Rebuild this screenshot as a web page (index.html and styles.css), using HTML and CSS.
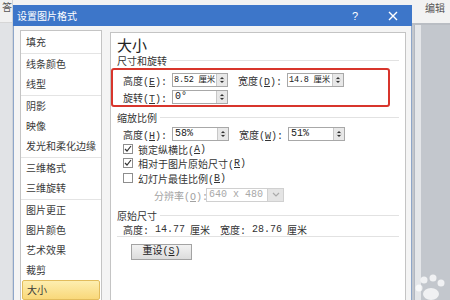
FILE: index.html
```html
<!DOCTYPE html>
<html lang="zh-CN">
<head>
    <meta charset="UTF-8">
    <title>设置图片格式</title>
    <link rel="stylesheet" href="styles.css">
</head>
<body>
    <div class="app-left">
        <div class="ribbon-left">答</div>
    </div>

    <div class="dialog-col">
        <div class="dialog">
            <div class="titlebar">
                <span class="title">设置图片格式</span>
                <span class="help">?</span>
                <svg class="close" width="10" height="10" viewBox="0 0 10 10">
                    <path d="M1 1L9 9M9 1L1 9" stroke="#fff" stroke-width="1.4" />
                </svg>
            </div>

            <div class="dlg-body">
                <!-- left category list -->
                <div class="cat-list">
                    <div class="cat-group">
                        <div class="cat">填充</div>
                    </div>
                    <div class="cat-group">
                        <div class="cat">线条颜色</div>
                        <div class="cat">线型</div>
                    </div>
                    <div class="cat-group">
                        <div class="cat">阴影</div>
                        <div class="cat">映像</div>
                        <div class="cat">发光和柔化边缘</div>
                    </div>
                    <div class="cat-group">
                        <div class="cat">三维格式</div>
                        <div class="cat">三维旋转</div>
                    </div>
                    <div class="cat-group">
                        <div class="cat">图片更正</div>
                        <div class="cat">图片颜色</div>
                        <div class="cat">艺术效果</div>
                        <div class="cat">裁剪</div>
                        <div class="cat active">大小</div>
                    </div>
                </div>

                <!-- size page -->
                <div class="panel">
                    <div class="panel-title">大小</div>

                    <div class="section"><span>尺寸和旋转</span><i></i></div>
                    <div class="row first">
                        <span class="lbl">高度(<u>E</u>):</span>
                        <div class="spin"><span class="val tight">8.52 厘米</span><span class="arrows"></span></div>
                        <span class="lbl lbl2">宽度(<u>D</u>):</span>
                        <div class="spin wide"><span class="val tight">14.8 厘米</span><span class="arrows"></span></div>
                    </div>
                    <div class="row">
                        <span class="lbl">旋转(<u>T</u>):</span>
                        <div class="spin"><span class="val">0°</span><span class="arrows"></span></div>
                    </div>

                    <div class="section s2"><span>缩放比例</span><i></i></div>
                    <div class="row r-scale">
                        <span class="lbl">高度(<u>H</u>):</span>
                        <div class="spin wide"><span class="val">58%</span><span class="arrows"></span></div>
                        <span class="lbl lbl2">宽度(<u>W</u>):</span>
                        <div class="spin wide"><span class="val">51%</span><span class="arrows"></span></div>
                    </div>
                    <div class="check-row"><span class="box checked"></span>锁定纵横比(<u>A</u>)</div>
                    <div class="check-row"><span class="box checked"></span>相对于图片原始尺寸(<u>R</u>)</div>
                    <div class="check-row last"><span class="box"></span>幻灯片最佳比例(<u>B</u>)</div>
                    <div class="res-row">
                        <span class="res-lbl">分辨率(<u>O</u>):</span>
                        <div class="select"><span class="val">640 x 480</span><span class="drop"></span></div>
                    </div>

                    <div class="section s3"><span>原始尺寸</span><i></i></div>
                    <div class="orig-row">
                        <span>高度:</span><span class="num">14.77</span><span>厘米</span>
                        <span class="gap">宽度:</span><span class="num">28.76</span><span>厘米</span>
                    </div>
                    <div class="rule"></div>
                    <div class="btn">重设(<u>S</u>)</div>

                    <div class="mark"></div>
                </div>
            </div>
        </div>
    </div>

    <div class="app-right">
        <div class="ribbon-right">编辑</div>
        <div class="desk"><div class="shadow"></div></div>
    </div>

    <svg class="watermark" width="34" height="26" viewBox="0 0 34 26">
        <circle cx="10" cy="6" r="3.5" fill="rgba(255,255,255,0.75)" />
        <circle cx="19" cy="4" r="3.5" fill="rgba(255,255,255,0.75)" />
        <circle cx="27" cy="9" r="3.5" fill="rgba(255,255,255,0.75)" />
        <circle cx="5" cy="14" r="3.5" fill="rgba(255,255,255,0.75)" />
        <ellipse cx="17" cy="20" rx="8" ry="6" fill="rgba(255,255,255,0.75)" />
    </svg>
</body>
</html>
```

FILE: styles.css
```css
body {
    margin: 0;
    width: 450px;
    height: 300px;
    overflow: hidden;
    display: grid;
    grid-template-columns: 13px 399px 38px;
    background-color: #c3c7cd;
    font-family: "Liberation Mono", "Noto Sans CJK SC", monospace;
    font-size: 10px;
    color: #333;
    position: relative;
}

u {
    text-decoration: underline;
}

/* app behind the dialog */
.app-left {
    background-color: #e1e3e6;
    border-right: 1px solid #cfd3d8;
}

.ribbon-left {
    height: 22px;
    background-color: #f1f1f1;
    border-bottom: 1px solid #d6d6d6;
    font-family: "Noto Sans CJK SC", sans-serif;
    color: #555;
    padding-left: 2px;
    line-height: 14px;
}

.app-right {
    display: flex;
    flex-direction: column;
}

.ribbon-right {
    height: 23px;
    background-color: #f2f2f2;
    border-bottom: 2px solid #b9bdc3;
    font-family: "Noto Sans CJK SC", sans-serif;
    color: #555;
    padding-left: 13px;
    line-height: 16px;
}

.desk {
    flex: 1;
    background-color: #c3c7cd;
    padding-left: 2px;
}

.shadow {
    width: 6px;
    height: 100%;
    background-color: #e4e6e9;
    border-left: 1px solid #b2b8c2;
}

/* dialog */
.dialog-col {
    padding-top: 5px;
    background-color: #f2f2f2;
    overflow: hidden;
}

.titlebar {
    height: 21px;
    background-color: #3d76c9;
    color: #fff;
    display: flex;
    align-items: center;
    padding-left: 4px;
    font-family: "Noto Sans CJK SC", sans-serif;
    font-size: 10px;
}

.title {
    flex: 1;
}

.help {
    font-family: "Liberation Sans", sans-serif;
    font-size: 11px;
    margin-right: 30px;
}

.close {
    margin-right: 14px;
}

.dlg-body {
    display: flex;
    height: 274px;
    padding: 4px 5px 0 6px;
    gap: 8px;
    background-color: #f4f4f4;
    border-left: 1px solid #8ea6c9;
    border-right: 1px solid #8ea6c9;
}

/* category list */
.cat-list {
    width: 82px;
    flex-shrink: 0;
    box-sizing: border-box;
    border: 1px solid #c4c4c4;
    border-bottom: none;
    background-color: #fff;
    padding-top: 1px;
    font-family: "Noto Sans CJK SC", sans-serif;
    color: #3a3a3a;
}

.cat-group + .cat-group {
    margin-top: 1px;
    border-top: 1px solid #e4e4e4;
}

.cat {
    height: 20px;
    line-height: 20px;
    padding-left: 5px;
    white-space: nowrap;
}

.cat.active {
    margin: 0 1px;
    padding-left: 4px;
    height: 18px;
    line-height: 18px;
    border: 1px solid #e2bc5c;
    border-radius: 2px;
    background: linear-gradient(#fdeeb0, #f9d87a);
}

/* right page */
.panel {
    flex: 1;
    position: relative;
    margin-top: 2px;
    border: 1px solid #c4c4c4;
    border-bottom: none;
    background-color: #fff;
    padding: 4px 6px 0 6px;
}

.panel-title {
    height: 16px;
    line-height: 16px;
    font-family: "Noto Sans CJK SC", sans-serif;
    font-size: 15px;
    color: #222;
}

.section {
    display: flex;
    align-items: center;
    gap: 3px;
    height: 12px;
    margin-top: 1px;
    color: #333;
}

.section i {
    flex: 1;
    border-top: 1px solid #e2e2e2;
}

.section.s2 {
    margin-top: 6px;
}

.section.s3 {
    margin-top: 7px;
}

.row {
    display: flex;
    align-items: center;
    height: 16px;
    margin-top: 1px;
    padding-left: 6px;
}

.row.first {
    margin-top: 6px;
}

.row.r-scale {
    margin-top: 3px;
}

.lbl {
    width: 49px;
    white-space: nowrap;
}

.lbl2 {
    margin-left: 10px;
}

.spin {
    width: 56px;
    height: 14px;
    box-sizing: border-box;
    border: 1px solid #a8a8a8;
    display: flex;
    background-color: #fff;
    overflow: hidden;
}

.spin.wide {
    width: 57px;
}

.val {
    flex: 1;
    padding-left: 2px;
    line-height: 12px;
    white-space: nowrap;
    color: #222;
}

.val.tight {
    font-size: 8.5px;
    letter-spacing: -0.2px;
    padding-left: 1px;
}

.arrows {
    width: 10px;
    flex-shrink: 0;
    border-left: 1px solid #c8c8c8;
    background: #e8e8e8 url("data:image/svg+xml,%3Csvg xmlns='http://www.w3.org/2000/svg' width='10' height='12'%3E%3Cpath d='M3 5h4L5 3z M3 7h4L5 9z' fill='%23333'/%3E%3Cpath d='M2 6h6' stroke='%23bbb' stroke-width='0.6'/%3E%3C/svg%3E") no-repeat center;
}

.check-row {
    display: flex;
    align-items: center;
    height: 14px;
    padding-left: 6px;
    white-space: nowrap;
}

.check-row.last {
    margin-top: 1px;
}

.box {
    width: 10px;
    height: 10px;
    box-sizing: border-box;
    border: 1px solid #8e8e8e;
    background-color: #fff;
    margin-right: 5px;
}

.box.checked {
    background: #fff url("data:image/svg+xml,%3Csvg xmlns='http://www.w3.org/2000/svg' width='8' height='8'%3E%3Cpath d='M1 4l2 2 4-5' fill='none' stroke='%23333' stroke-width='1.2'/%3E%3C/svg%3E") no-repeat center;
}

.res-row {
    display: flex;
    align-items: center;
    height: 14px;
    margin-top: 3px;
    padding-left: 37px;
    color: #a2a2a2;
}

.res-lbl {
    width: 52px;
    white-space: nowrap;
}

.select {
    width: 78px;
    height: 14px;
    box-sizing: border-box;
    border: 1px solid #d0d0d0;
    display: flex;
}

.select .val {
    color: #a8a8a8;
}

.drop {
    width: 15px;
    background: #e4e4e4 url("data:image/svg+xml,%3Csvg xmlns='http://www.w3.org/2000/svg' width='8' height='6'%3E%3Cpath d='M1 1l3 3 3-3' fill='none' stroke='%23aaa' stroke-width='1.2'/%3E%3C/svg%3E") no-repeat center;
    border-left: 1px solid #d0d0d0;
}

.orig-row {
    display: flex;
    align-items: center;
    height: 12px;
    margin-top: 2px;
    padding-left: 6px;
    white-space: nowrap;
}

.orig-row .num {
    margin: 0 5px 0 6px;
}

.orig-row .gap {
    margin-left: 10px;
}

.rule {
    margin-top: 1px;
    border-top: 1px solid #e2e2e2;
}

.btn {
    width: 61px;
    height: 16px;
    box-sizing: border-box;
    margin: 7px 0 0 14px;
    border: 1px solid #a3a3a3;
    background: linear-gradient(#f2f2f2, #dcdcdc);
    text-align: center;
    line-height: 14px;
    color: #222;
}

/* red annotation around the size fields */
.mark {
    position: absolute;
    left: 0;
    top: 35px;
    width: 279px;
    height: 39px;
    box-sizing: border-box;
    border: 2px solid #d8352c;
    border-radius: 3px;
}

.watermark {
    position: absolute;
    right: 2px;
    bottom: 0;
}
```
